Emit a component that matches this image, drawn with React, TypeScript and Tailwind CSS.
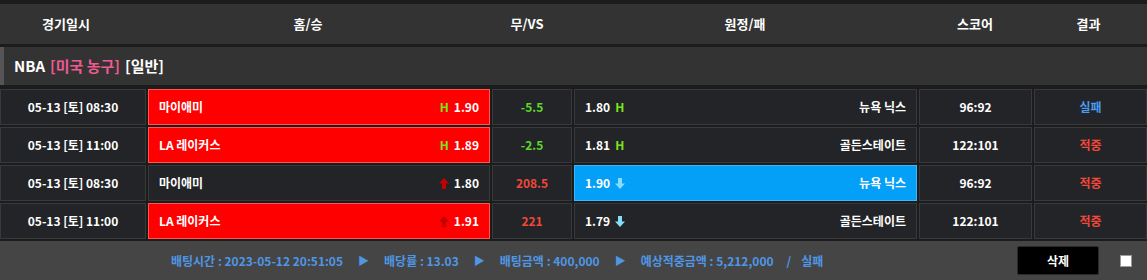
import React from "react";

const FONT = { fontFamily: '"Noto Sans CJK KR", "Noto Sans", sans-serif' };

type Row = {
  date: string;
  home: string;
  homeOdds: string;
  homeMark: "H" | "up";
  homeSel: boolean;
  draw: string;
  drawColor: string;
  awayOdds: string;
  awayMark: "H" | "down";
  away: string;
  awaySel: boolean;
  score: string;
  result: string;
  resultColor: string;
};

const ROWS: Row[] = [
  { date: "05-13 [토] 08:30", home: "마이애미", homeOdds: "1.90", homeMark: "H", homeSel: true, draw: "-5.5", drawColor: "text-[#5cd92a]", awayOdds: "1.80", awayMark: "H", away: "뉴욕 닉스", awaySel: false, score: "96:92", result: "실패", resultColor: "text-[#4a9bf0]" },
  { date: "05-13 [토] 11:00", home: "LA 레이커스", homeOdds: "1.89", homeMark: "H", homeSel: true, draw: "-2.5", drawColor: "text-[#5cd92a]", awayOdds: "1.81", awayMark: "H", away: "골든스테이트", awaySel: false, score: "122:101", result: "적중", resultColor: "text-[#f0483a]" },
  { date: "05-13 [토] 08:30", home: "마이애미", homeOdds: "1.80", homeMark: "up", homeSel: false, draw: "208.5", drawColor: "text-[#f0483a]", awayOdds: "1.90", awayMark: "down", away: "뉴욕 닉스", awaySel: true, score: "96:92", result: "적중", resultColor: "text-[#f0483a]" },
  { date: "05-13 [토] 11:00", home: "LA 레이커스", homeOdds: "1.91", homeMark: "up", homeSel: true, draw: "221", drawColor: "text-[#f0483a]", awayOdds: "1.79", awayMark: "down", away: "골든스테이트", awaySel: false, score: "122:101", result: "적중", resultColor: "text-[#f0483a]" },
];

function UpArrow() {
  return (
    <svg width="10" height="11" viewBox="0 0 10 11">
      <path d="M5 0 L10 5.5 L7 5.5 L7 11 L3 11 L3 5.5 L0 5.5 Z" fill="#c40000" />
    </svg>
  );
}

function DownArrow() {
  return (
    <svg width="10" height="11" viewBox="0 0 10 11">
      <path d="M3 0 L7 0 L7 5.5 L10 5.5 L5 11 L0 5.5 L3 5.5 Z" fill="#86dcfb" />
    </svg>
  );
}

const cell = "h-[36px] flex items-center border border-[#38393b] bg-[#232427]";

export default function App() {
  return (
    <div className="w-[1147px] h-[280px] bg-[#1c1c1c] pt-[4px] text-white font-bold" style={FONT}>
      {/* header */}
      <div className="flex h-[40px] items-center bg-[#333333] text-[13px]">
        <div className="w-[132px] text-center">경기일시</div>
        <div className="w-[352px] text-center">홈/승</div>
        <div className="w-[86px] text-center">무/VS</div>
        <div className="w-[350px] text-center">원정/패</div>
        <div className="w-[110px] text-center">스코어</div>
        <div className="flex-1 text-center">결과</div>
      </div>

      {/* league */}
      <div className="mt-[3px] h-[38px] flex items-center bg-[#333333] border-l-[4px] border-[#555555] pl-[10px] text-[15px]">
        <span>NBA</span>
        <span className="ml-[5px] text-[#ee5a92]">[미국 농구]</span>
        <span className="ml-[5px]">[일반]</span>
      </div>

      {/* rows */}
      <div className="mt-[4px] flex flex-col gap-[2px] text-[12px]">
        {ROWS.map((r, i) => (
          <div key={i} className="flex gap-[2px]">
            <div className={`${cell} w-[146px] justify-center`}>{r.date}</div>
            <div
              className={`h-[36px] w-[342px] flex items-center justify-between px-[10px] border ${
                r.homeSel ? "bg-[#ff0000] border-[#ff5656]" : "bg-[#232427] border-[#38393b]"
              }`}
            >
              <span>{r.home}</span>
              <span className="flex items-center gap-[5px]">
                {r.homeMark === "H" ? <span className="text-[#7be31c]">H</span> : <UpArrow />}
                <span>{r.homeOdds}</span>
              </span>
            </div>
            <div className={`${cell} w-[80px] justify-center ${r.drawColor}`}>{r.draw}</div>
            <div
              className={`h-[36px] w-[343px] flex items-center justify-between px-[10px] border ${
                r.awaySel ? "bg-[#049ff7] border-[#3cb6ff]" : "bg-[#232427] border-[#38393b]"
              }`}
            >
              <span className="flex items-center gap-[5px]">
                <span>{r.awayOdds}</span>
                {r.awayMark === "H" ? <span className="text-[#7be31c]">H</span> : <DownArrow />}
              </span>
              <span>{r.away}</span>
            </div>
            <div className={`${cell} w-[113px] justify-center`}>{r.score}</div>
            <div className={`${cell} flex-1 justify-center ${r.resultColor}`}>{r.result}</div>
          </div>
        ))}
      </div>

      {/* footer */}
      <div className="mt-[2px] h-[39px] flex items-center bg-[#454545] text-[12px]">
        <div className="flex-1 flex items-center pl-[171px] text-[#4f97e6] gap-[15px]">
          <span>배팅시간 : 2023-05-12 20:51:05</span>
          <span className="text-[11px]">▶</span>
          <span>배당률 : 13.03</span>
          <span className="text-[11px]">▶</span>
          <span>배팅금액 : 400,000</span>
          <span className="text-[11px]">▶</span>
          <span>예상적중금액 : 5,212,000</span>
          <span className="ml-[-2px] flex gap-[10px]">
            <span>/</span>
            <span>실패</span>
          </span>
        </div>
        <button className="w-[82px] h-[29px] bg-black border border-[#2a2a2a] rounded-[2px] text-white text-[12px] font-bold">
          삭제
        </button>
        <div className="ml-[21px] mr-[15px] w-[12px] h-[12px] bg-white border border-[#9a9a9a]" />
      </div>
    </div>
  );
}
